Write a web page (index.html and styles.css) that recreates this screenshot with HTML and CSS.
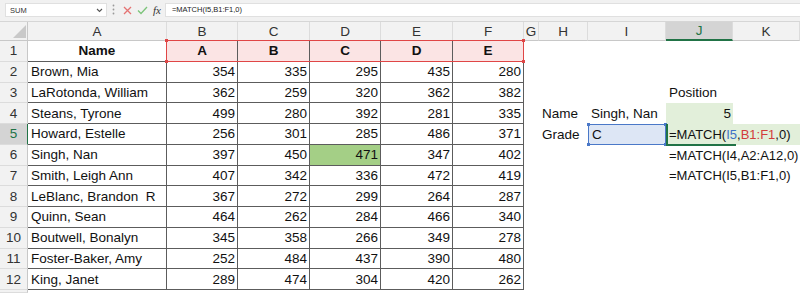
FILE: index.html
```html
<!DOCTYPE html>
<html lang="en">
<head>
  <meta charset="UTF-8">
  <title>MATCH lookup</title>
  <link rel="stylesheet" href="styles.css">
</head>
<body>
  <div class="fbar">
    <div class="namebox">
      <span>SUM</span>
      <svg width="7" height="5" viewBox="0 0 7 5"><path d="M1 1 L3.5 3.5 L6 1" fill="none" stroke="#555" stroke-width="1.1"/></svg>
    </div>
    <svg class="dots" width="3" height="11" viewBox="0 0 3 11"><circle cx="1.5" cy="1.5" r="0.9" fill="#999"/><circle cx="1.5" cy="5.5" r="0.9" fill="#999"/><circle cx="1.5" cy="9.5" r="0.9" fill="#999"/></svg>
    <svg class="ico x" width="9" height="9" viewBox="0 0 9 9"><path d="M1 1 L8 8 M8 1 L1 8" stroke="#e57373" stroke-width="1.3"/></svg>
    <svg class="ico" width="11" height="9" viewBox="0 0 11 9"><path d="M1 4.5 L4 7.5 L10 1" fill="none" stroke="#7cc47a" stroke-width="1.3"/></svg>
    <span class="fx">fx</span>
    <div class="formula">=MATCH(I5,B1:F1,0)</div>
  </div>

  <div class="sheet">
    <div class="corner"><svg width="13" height="13" viewBox="0 0 13 13"><path d="M13 0 L13 13 L0 13 Z" fill="#c9c9c9"/></svg></div>
    <div class="ch">A</div>
    <div class="ch">B</div>
    <div class="ch">C</div>
    <div class="ch">D</div>
    <div class="ch">E</div>
    <div class="ch">F</div>
    <div class="ch">G</div>
    <div class="ch">H</div>
    <div class="ch">I</div>
    <div class="ch sel">J</div>
    <div class="ch">K</div>

    <!-- row 1 -->
    <div class="rh">1</div>
    <div class="c t head">Name</div>
    <div class="range">
      <div class="c t head">A</div>
      <div class="c t head">B</div>
      <div class="c t head">C</div>
      <div class="c t head">D</div>
      <div class="c head">E</div>
    </div>
    <div class="c"></div><div class="c"></div><div class="c"></div><div class="c"></div><div class="c"></div>

    <!-- row 2 -->
    <div class="rh">2</div>
    <div class="c t">Brown, Mia</div>
    <div class="c t num">354</div><div class="c t num">335</div><div class="c t num">295</div><div class="c t num">435</div><div class="c t num">280</div>
    <div class="c"></div><div class="c"></div><div class="c"></div><div class="c"></div><div class="c"></div>

    <!-- row 3 -->
    <div class="rh">3</div>
    <div class="c t">LaRotonda, William</div>
    <div class="c t num">362</div><div class="c t num">259</div><div class="c t num">320</div><div class="c t num">362</div><div class="c t num">382</div>
    <div class="c"></div><div class="c"></div><div class="c"></div>
    <div class="c">Position</div>
    <div class="c"></div>

    <!-- row 4 -->
    <div class="rh">4</div>
    <div class="c t">Steans, Tyrone</div>
    <div class="c t num">499</div><div class="c t num">280</div><div class="c t num">392</div><div class="c t num">281</div><div class="c t num">335</div>
    <div class="c"></div>
    <div class="c">Name</div>
    <div class="c">Singh, Nan</div>
    <div class="c num found">5</div>
    <div class="c"></div>

    <!-- row 5 -->
    <div class="rh sel">5</div>
    <div class="c t">Howard, Estelle</div>
    <div class="c t num">256</div><div class="c t num">301</div><div class="c t num">285</div><div class="c t num">486</div><div class="c t num">371</div>
    <div class="c"></div>
    <div class="c">Grade</div>
    <div class="c pick">C</div>
    <div class="c edit">=MATCH(<span class="ref-b">I5</span>,<span class="ref-r">B1:F1</span>,0)</div>

    <!-- row 6 -->
    <div class="rh">6</div>
    <div class="c t">Singh, Nan</div>
    <div class="c t num">397</div><div class="c t num">450</div><div class="c t num hit">471</div><div class="c t num">347</div><div class="c t num">402</div>
    <div class="c"></div><div class="c"></div><div class="c"></div>
    <div class="c wide">=MATCH(I4,A2:A12,0)</div>

    <!-- row 7 -->
    <div class="rh">7</div>
    <div class="c t">Smith, Leigh Ann</div>
    <div class="c t num">407</div><div class="c t num">342</div><div class="c t num">336</div><div class="c t num">472</div><div class="c t num">419</div>
    <div class="c"></div><div class="c"></div><div class="c"></div>
    <div class="c wide">=MATCH(I5,B1:F1,0)</div>

    <!-- row 8 -->
    <div class="rh">8</div>
    <div class="c t">LeBlanc, Brandon  R</div>
    <div class="c t num">367</div><div class="c t num">272</div><div class="c t num">299</div><div class="c t num">264</div><div class="c t num">287</div>
    <div class="c"></div><div class="c"></div><div class="c"></div><div class="c"></div><div class="c"></div>

    <!-- row 9 -->
    <div class="rh">9</div>
    <div class="c t">Quinn, Sean</div>
    <div class="c t num">464</div><div class="c t num">262</div><div class="c t num">284</div><div class="c t num">466</div><div class="c t num">340</div>
    <div class="c"></div><div class="c"></div><div class="c"></div><div class="c"></div><div class="c"></div>

    <!-- row 10 -->
    <div class="rh">10</div>
    <div class="c t">Boutwell, Bonalyn</div>
    <div class="c t num">345</div><div class="c t num">358</div><div class="c t num">266</div><div class="c t num">349</div><div class="c t num">278</div>
    <div class="c"></div><div class="c"></div><div class="c"></div><div class="c"></div><div class="c"></div>

    <!-- row 11 -->
    <div class="rh">11</div>
    <div class="c t">Foster-Baker, Amy</div>
    <div class="c t num">252</div><div class="c t num">484</div><div class="c t num">437</div><div class="c t num">390</div><div class="c t num">480</div>
    <div class="c"></div><div class="c"></div><div class="c"></div><div class="c"></div><div class="c"></div>

    <!-- row 12 -->
    <div class="rh">12</div>
    <div class="c t">King, Janet</div>
    <div class="c t num">289</div><div class="c t num">474</div><div class="c t num">304</div><div class="c t num">420</div><div class="c t num">262</div>
    <div class="c"></div><div class="c"></div><div class="c"></div><div class="c"></div><div class="c"></div>

    <!-- row 13 (cut off) -->
    <div class="rh"></div>
  </div>
</body>
</html>
```

FILE: styles.css
```css
* {
  box-sizing: border-box;
}
body {
  margin: 0;
  font-family: 'Liberation Sans', Arial, sans-serif;
  background: #fff;
  color: #111;
  overflow: hidden;
}

/* formula bar */
.fbar {
  height: 22px;
  background: #f1f1f1;
  border-bottom: 1px solid #d6d6d6;
  display: flex;
  align-items: flex-start;
  padding-top: 3px;
}
.namebox {
  margin-left: 5px;
  width: 102px;
  height: 14px;
  background: #fff;
  border: 1px solid #e0e0e0;
  display: flex;
  align-items: center;
  justify-content: space-between;
  padding: 0 3px 0 4px;
  font-size: 7.5px;
  color: #333;
}
.dots {
  margin: 1px 0 0 5px;
}
.ico {
  margin: 3px 0 0 5px;
}
.ico.x {
  margin-left: 8px;
}
.fx {
  margin: 0 0 0 5px;
  font-family: 'Liberation Serif', serif;
  font-style: italic;
  font-size: 11px;
  line-height: 14px;
  color: #333;
}
.formula {
  flex: 1;
  margin-left: 4px;
  height: 14px;
  background: #fff;
  border: 1px solid #e0e0e0;
  border-right: none;
  padding-left: 6px;
  font-size: 7.5px;
  line-height: 12px;
  color: #222;
}

/* grid */
.sheet {
  display: grid;
  grid-template-columns: 28px 139px 71px 72px 71px 72px 71px 15px 49px 78px 67px 67px;
  grid-template-rows: 19px repeat(12, 20.75px) 1fr;
  height: 271px;
  font-size: 13.5px;
}
.corner {
  background: #f2f2f2;
  border-right: 1px solid #c8c8c8;
  border-bottom: 1px solid #c8c8c8;
  display: flex;
  align-items: flex-end;
  justify-content: flex-end;
  padding: 0 1px 2px 0;
}
.ch {
  background: #f2f2f2;
  border-right: 1px solid #dcdcdc;
  border-bottom: 1px solid #c8c8c8;
  display: flex;
  align-items: center;
  justify-content: center;
  color: #333;
}
.ch.sel {
  background: #d4d4d4;
  color: #217346;
  border-bottom: 2px solid #217346;
}
.rh {
  background: #f2f2f2;
  border-right: 1px solid #c8c8c8;
  border-bottom: 1px solid #dcdcdc;
  display: flex;
  align-items: center;
  justify-content: center;
  color: #333;
}
.rh.sel {
  background: #d4d4d4;
  color: #217346;
  border-right: 1px solid #217346;
}

.c {
  display: flex;
  align-items: center;
  padding: 0 3px;
  white-space: pre;
  min-width: 0;
}
.t {
  border-right: 1px solid #5c5c5c;
  border-bottom: 1px solid #5c5c5c;
}
.num {
  justify-content: flex-end;
  padding-right: 2px;
}
.head {
  justify-content: center;
  font-weight: bold;
}
.hit {
  background: #a4cf86;
}

/* reference highlight B1:F1 */
.range {
  grid-column: span 5;
  margin: -1px 0 0 -1px;
  display: grid;
  grid-template-columns: 71px 72px 71px 72px 70px;
  background: #fbe4e4;
  border: 1px solid #e04646;
  position: relative;
}
.range .t {
  border-bottom: none;
}
.range::after {
  content: "";
  position: absolute;
  inset: -2px;
  background:
    linear-gradient(#e04646, #e04646) left top / 3px 3px no-repeat,
    linear-gradient(#e04646, #e04646) right top / 3px 3px no-repeat,
    linear-gradient(#e04646, #e04646) left bottom / 3px 3px no-repeat,
    linear-gradient(#e04646, #e04646) right bottom / 3px 3px no-repeat;
}

/* lookup area */
.found {
  background: #e2efda;
}
.pick {
  background: #dde6f5;
  border: 1px solid #4a78c8;
  position: relative;
}
.pick::after {
  content: "";
  position: absolute;
  inset: -2px;
  background:
    linear-gradient(#4a78c8, #4a78c8) left top / 3px 3px no-repeat,
    linear-gradient(#4a78c8, #4a78c8) right top / 3px 3px no-repeat,
    linear-gradient(#4a78c8, #4a78c8) left bottom / 3px 3px no-repeat,
    linear-gradient(#4a78c8, #4a78c8) right bottom / 3px 3px no-repeat;
}
.edit {
  grid-column: span 2;
  background: #e2efda;
  position: relative;
  font-size: 13px;
}
.edit::before {
  content: "";
  position: absolute;
  left: 0;
  top: 0;
  width: 68px;
  bottom: -1px;
  border-left: 2px solid #217346;
  border-bottom: 2px solid #217346;
}
.wide {
  grid-column: span 2;
  font-size: 13px;
}
.ref-b {
  color: #3f72c6;
}
.ref-r {
  color: #d23c3c;
}
```
